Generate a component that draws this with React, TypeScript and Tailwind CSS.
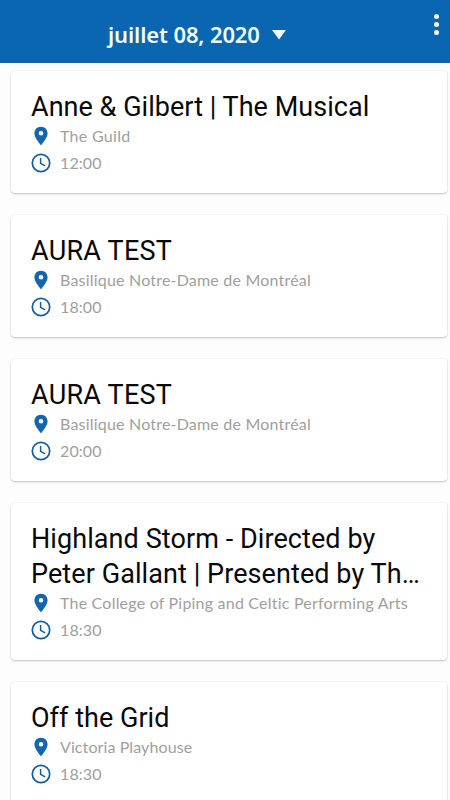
type EventItem = {
  id: number;
  title: string;
  venue: string;
  time: string;
  titleClass: string;
  venueClass: string;
};

const events: EventItem[] = [
  {
    id: 1,
    title: "Anne & Gilbert | The Musical",
    venue: "The Guild",
    time: "12:00",
    titleClass: "tracking-[0.03px]",
    venueClass: "tracking-[0.3px]",
  },
  {
    id: 2,
    title: "AURA TEST",
    venue: "Basilique Notre-Dame de Montréal",
    time: "18:00",
    titleClass: "tracking-[0.25px]",
    venueClass: "tracking-[0.2px]",
  },
  {
    id: 3,
    title: "AURA TEST",
    venue: "Basilique Notre-Dame de Montréal",
    time: "20:00",
    titleClass: "tracking-[0.25px]",
    venueClass: "tracking-[0.2px]",
  },
  {
    id: 4,
    title: "Highland Storm - Directed by Peter Gallant | Presented by Th…",
    venue: "The College of Piping and Celtic Performing Arts",
    time: "18:30",
    titleClass: "tracking-[0.08px]",
    venueClass: "tracking-[0.21px]",
  },
  {
    id: 5,
    title: "Off the Grid",
    venue: "Victoria Playhouse",
    time: "18:30",
    titleClass: "tracking-[0.03px]",
    venueClass: "tracking-[0.1px]",
  },
];

function PinIcon() {
  return (
    <svg className="h-[22px] w-5 shrink-0" viewBox="0 0 20 22" fill="#1166ad">
      <path
        fillRule="evenodd"
        d="M10 1.800C6.200 1.800 3.400 4.600 3.400 8.300c0 4.800 6.600 12 6.600 12s6.600-7.200 6.600-12C16.600 4.600 13.800 1.800 10 1.800Zm0 4.200a2.300 2.300 0 1 1 0 4.600 2.300 2.300 0 0 1 0-4.600Z"
      />
    </svg>
  );
}

function ClockIcon() {
  return (
    <svg className="h-5 w-5 shrink-0" viewBox="0 0 20 20" fill="none" stroke="#125d9c">
      <circle cx="10" cy="10" r="8.700" strokeWidth="1.700" />
      <path d="M9.600 5v5.400l4.500 2.500" strokeWidth="1.500" />
    </svg>
  );
}

function EventCard({ event }: { event: EventItem }) {
  return (
    <article className="rounded-[4px] bg-white px-5 pt-[19px] pb-[17px] shadow-[0_1px_2px_rgba(0,0,0,0.22),0_0_2px_rgba(0,0,0,0.08)]">
      <h2 className={`font-['Roboto',sans-serif] text-[27px] leading-[35px] text-[#080808] ${event.titleClass}`}>
        {event.title}
      </h2>
      <div className="-mt-[3px] font-['Lato',sans-serif] text-base text-[#a0a0a0]">
        <div className="flex h-[27px] items-center gap-[9px]">
          <PinIcon />
          <span className={event.venueClass}>{event.venue}</span>
        </div>
        <div className="flex h-[27px] items-center gap-[9px]">
          <ClockIcon />
          <span className="tracking-[0.1px]">{event.time}</span>
        </div>
      </div>
    </article>
  );
}

export default function App() {
  return (
    <main className="flex h-[800px] w-full flex-col overflow-hidden bg-[#fdfdfd]">
      <header className="flex h-[63px] shrink-0 justify-between border-b border-[#22659d] bg-[#0b66b1]">
        <button className="ml-[108px] flex h-[69px] items-center gap-3 font-['Noto_Sans',sans-serif] text-[22px] font-semibold tracking-[-0.13px] whitespace-nowrap text-[#effcff]">
          juillet 08, 2020
          <svg className="h-[10px] w-[14px]" viewBox="0 0 14 10" fill="currentColor">
            <path d="M0 0h14L7 9.500Z" />
          </svg>
        </button>
        <button className="mt-[14px] mr-[11px] flex h-[21px] flex-col justify-between" aria-label="Menu">
          <span className="h-[5px] w-[5px] rounded-full bg-[#f2fbff]" />
          <span className="h-[5px] w-[5px] rounded-full bg-[#f2fbff]" />
          <span className="h-[5px] w-[5px] rounded-full bg-[#f2fbff]" />
        </button>
      </header>

      <section className="flex flex-col gap-[22px] pt-2 pr-[3px] pl-[11px]">
        {events.map((event) => (
          <EventCard key={event.id} event={event} />
        ))}
      </section>
    </main>
  );
}
